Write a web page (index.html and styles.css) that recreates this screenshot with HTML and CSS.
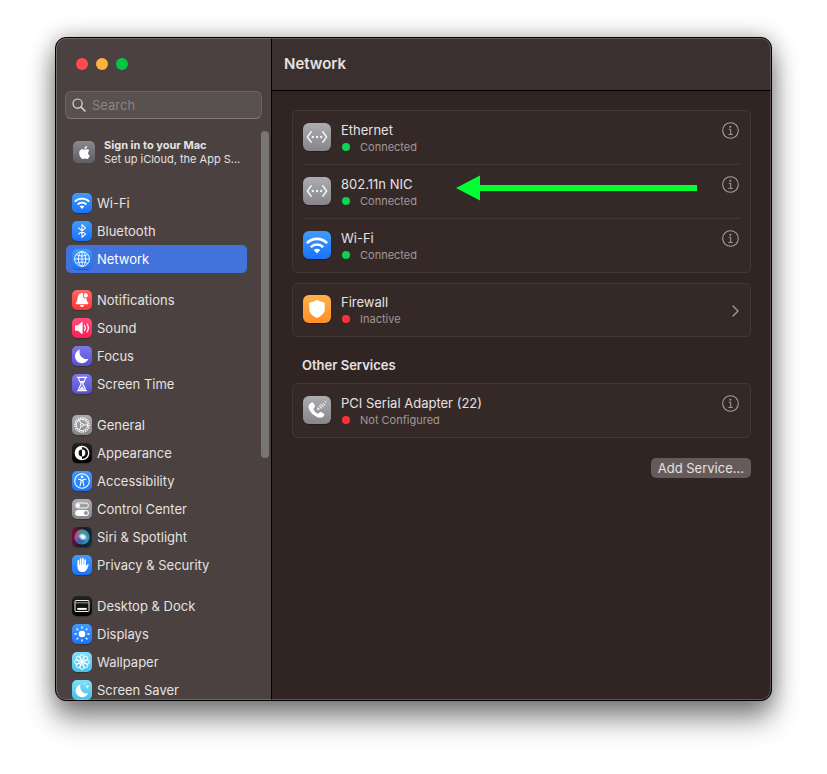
FILE: index.html
```html
<!DOCTYPE html>
<html lang="en">
<head>
<meta charset="utf-8">
<meta name="viewport" content="width=device-width, initial-scale=1">
<title>Network</title>
<link rel="stylesheet" href="styles.css">
</head>
<body>
<svg class="defs" aria-hidden="true">
  <defs>
    <symbol id="wifi" viewBox="0 0 20 20">
      <g fill="none" stroke="#fff" stroke-width="1.8">
        <path d="M2.8 8.6a10.2 10.2 0 0 1 14.4 0"/>
        <path d="M5.6 11.5a6.3 6.3 0 0 1 8.8 0"/>
      </g>
      <path d="M10 16l-2.3-2.4a3.3 3.3 0 0 1 4.6 0z" fill="#fff"/>
    </symbol>
    <symbol id="ethernet" viewBox="0 0 28 28">
      <path d="M8.2 8.8L4.4 14l3.8 5.2M19.8 8.8l3.8 5.2-3.8 5.2" fill="none" stroke="#f4f4f4" stroke-width="1.5" stroke-linecap="round" stroke-linejoin="round"/>
      <g fill="#f4f4f4"><circle cx="9.8" cy="14" r="1.2"/><circle cx="14" cy="14" r="1.2"/><circle cx="18.2" cy="14" r="1.2"/></g>
    </symbol>
    <symbol id="info" viewBox="0 0 17 17">
      <circle cx="8.5" cy="8.5" r="7.8" fill="none" stroke="currentColor" stroke-width="1.1"/>
      <circle cx="8.3" cy="4.7" r="1" fill="currentColor"/>
      <path d="M6.8 7.3h1.9v4.9M6.4 12.4h4.4" fill="none" stroke="currentColor" stroke-width="1"/>
    </symbol>
  </defs>
</svg>

<div class="window">
  <aside class="sidebar">
    <div class="lights">
      <button class="light close" aria-label="Close"></button>
      <button class="light minimize" aria-label="Minimize"></button>
      <button class="light expand" aria-label="Zoom"></button>
    </div>
    <label class="search">
      <svg width="14" height="14" viewBox="0 0 14 14" aria-hidden="true"><circle cx="5.6" cy="5.6" r="4.6" fill="none" stroke="#dedada" stroke-width="1.2"/><path d="M9 9l4 4" stroke="#dedada" stroke-width="1.5" stroke-linecap="round"/></svg>
      <input type="search" placeholder="Search" aria-label="Search">
    </label>
    <a class="account" href="#">
      <span class="account-icon"><svg width="13" height="13" viewBox="0 0 24 24" aria-hidden="true"><path fill="#fff" d="M12.152 6.896c-.948 0-2.415-1.078-3.96-1.04-2.04.027-3.91 1.183-4.961 3.014-2.117 3.675-.546 9.103 1.519 12.09 1.013 1.454 2.208 3.09 3.792 3.039 1.52-.065 2.09-.987 3.935-.987 1.831 0 2.35.987 3.96.948 1.637-.026 2.676-1.48 3.676-2.948 1.156-1.688 1.636-3.325 1.662-3.415-.039-.013-3.182-1.221-3.22-4.857-.026-3.04 2.48-4.494 2.597-4.559-1.429-2.09-3.623-2.324-4.39-2.376-2-.156-3.675 1.09-4.61 1.09zM15.53 3.83c.843-1.012 1.4-2.427 1.245-3.83-1.207.052-2.662.805-3.532 1.818-.78.896-1.454 2.338-1.273 3.714 1.338.104 2.715-.688 3.559-1.701"/></svg></span>
      <span class="account-text"><strong>Sign in to your Mac</strong><span>Set up iCloud, the App S...</span></span>
    </a>
    <nav class="nav" aria-label="Settings">
      <ul>
        <li><a href="#"><span class="tile blue"><svg viewBox="0 0 20 20"><use href="#wifi"/></svg></span>Wi-Fi</a></li>
        <li><a href="#"><span class="tile blue"><svg viewBox="0 0 20 20"><path d="M6.3 6.6l7.2 6.6-3.5 3.2V3.6l3.5 3.2-7.2 6.6" fill="none" stroke="#fff" stroke-width="1.1" stroke-linejoin="round"/></svg></span>Bluetooth</a></li>
        <li><a href="#" class="selected" aria-current="page"><span class="tile blue"><svg viewBox="0 0 20 20"><g fill="none" stroke="#fff" stroke-width=".9"><circle cx="10" cy="10" r="7.4"/><ellipse cx="10" cy="10" rx="3.7" ry="7.4"/><path d="M10 2.6v14.8M2.6 10h14.8M4.3 5.6c3.2 1.9 8.2 1.9 11.4 0M4.3 14.4c3.2-1.9 8.2-1.9 11.4 0"/></g></svg></span>Network</a></li>
      </ul>
      <ul>
        <li><a href="#"><span class="tile red"><svg viewBox="0 0 20 20"><path d="M10 3.2c-3 0-4.300 2.200-4.400 4.900-.1 2.500-.6 3.500-1.700 4.600-.6.7-.3 1.500.6 1.500h11c.9 0 1.200-.8.6-1.500-1.100-1.100-1.600-2.100-1.700-4.600C14.300 5.400 13 3.200 10 3.200zM8 15.100h4a2 2 0 0 1-4 0z" fill="#fff"/><circle cx="13.800" cy="5.400" r="2.900" fill="#ff5750"/><circle cx="13.800" cy="5.400" r="2.100" fill="#fff"/></svg></span>Notifications</a></li>
        <li><a href="#"><span class="tile pink"><svg viewBox="0 0 20 20"><path d="M3 8.200c0-.6.4-.9.900-.9h2.300l3.300-3c.5-.4 1.100-.2 1.100.5v10.400c0 .7-.6.9-1.100.5l-3.300-3H3.900c-.5 0-.9-.3-.9-.9z" fill="#fff"/><path d="M12.600 7.600c1 1.500 1 3.300 0 4.800M15 6c1.700 2.500 1.700 5.500 0 8" fill="none" stroke="#fff" stroke-width="1.200" stroke-linecap="round"/></svg></span>Sound</a></li>
        <li><a href="#"><span class="tile indigo"><svg viewBox="0 0 20 20"><path d="M8 3.500a7 7 0 1 0 8.500 9.300A7 7 0 0 1 8 3.500z" fill="#fff"/></svg></span>Focus</a></li>
        <li><a href="#"><span class="tile indigo"><svg viewBox="0 0 20 20"><path d="M5.500 3.400h9M5.500 16.600h9" stroke="#fff" stroke-width="1.400" stroke-linecap="round"/><path d="M6.700 4c0 3.400 2.400 4 2.400 6s-2.400 2.600-2.400 6h6.600c0-3.400-2.400-4-2.400-6s2.400-2.600 2.400-6" fill="none" stroke="#fff" stroke-width="1.200"/><path d="M8 7h4l-2 2.500zM7.400 15.500L10 12.300l2.600 3.200z" fill="#fff"/></svg></span>Screen Time</a></li>
      </ul>
      <ul>
        <li><a href="#"><span class="tile gray"><svg viewBox="0 0 20 20"><g fill="none" stroke="#fff"><circle cx="10" cy="10" r="7.100" stroke-width="1.500" stroke-dasharray="1.300 .93"/><circle cx="10" cy="10" r="5.700" stroke-width=".9"/><circle cx="10" cy="10" r="1.500" stroke-width=".9"/><path d="M11.500 10H16M9.200 8.700L7 4.900M9.200 11.300L7 15.100" stroke-width="1"/></g></svg></span>General</a></li>
        <li><a href="#"><span class="tile black"><svg viewBox="0 0 20 20"><circle cx="10" cy="10" r="6.700" fill="none" stroke="#fff" stroke-width="1.300"/><path d="M10 3.300a6.700 6.700 0 0 0 0 13.400v-3.300a3.400 3.400 0 0 1 0-6.800zM10 6.600a3.400 3.400 0 0 1 0 6.800z" fill="#fff"/></svg></span>Appearance</a></li>
        <li><a href="#"><span class="tile blue"><svg viewBox="0 0 20 20"><circle cx="10" cy="10" r="7.300" fill="none" stroke="#fff" stroke-width="1.100"/><circle cx="10" cy="5.900" r="1.300" fill="#fff"/><path d="M6.300 8.200l2.700.6v2.300L8 14.900M13.700 8.200l-2.700.6v2.300l1 3.800M9 9.600h2" fill="none" stroke="#fff" stroke-width="1.100" stroke-linecap="round"/></svg></span>Accessibility</a></li>
        <li><a href="#"><span class="tile gray"><svg viewBox="0 0 20 20"><rect x="3.600" y="4" width="12.800" height="5" rx="2.500" fill="none" stroke="#fff" stroke-width="1"/><circle cx="6.100" cy="6.500" r="1.900" fill="#fff"/><rect x="3.100" y="11" width="13.800" height="6" rx="3" fill="#fff"/><circle cx="13.900" cy="14" r="2" fill="#96969a"/></svg></span>Control Center</a></li>
        <li><a href="#"><span class="tile siri"><svg viewBox="0 0 20 20"><defs><linearGradient id="orb" x1="0" y1=".2" x2="1" y2=".8"><stop offset="0" stop-color="#e92b67"/><stop offset=".45" stop-color="#5b7bb0"/><stop offset="1" stop-color="#1d9fc0"/></linearGradient><radialGradient id="glow"><stop offset="0" stop-color="#fff"/><stop offset=".4" stop-color="#e8faff" stop-opacity=".95"/><stop offset="1" stop-color="#9fe" stop-opacity="0"/></radialGradient></defs><circle cx="10" cy="10" r="7.600" fill="url(#orb)"/><path d="M3.500 6.500C7 1 14 1.500 16.800 7c-4-2-8-2-13.300-.5z" fill="#36a57b" opacity=".8"/><path d="M4 14c3-3 4-6 11-6-1 4-2 7-5 9-3 0-5-1-6-3z" fill="#2460a8" opacity=".65"/><ellipse cx="10.800" cy="9.800" rx="5" ry="3.800" fill="url(#glow)" transform="rotate(25 10.800 9.800)"/></svg></span>Siri &amp; Spotlight</a></li>
        <li><a href="#"><span class="tile blue"><svg viewBox="0 0 20 20"><path d="M6.300 10.500V5.900M8.600 9.500V4M10.900 9.500V3.700M13.100 10V5" stroke="#fff" stroke-width="1.700" stroke-linecap="round"/><path d="M5.500 9.500h8.500v1.800l1.200-1.700c.7-.8 1.700-.2 1.400.6-1 2.600-2.100 6.700-5.700 6.900-3.500.2-5.400-2-5.400-5.200z" fill="#fff"/></svg></span>Privacy &amp; Security</a></li>
      </ul>
      <ul>
        <li><a href="#"><span class="tile black"><svg viewBox="0 0 20 20"><rect x="3" y="4.500" width="14" height="11" rx="1" fill="none" stroke="#eee" stroke-width="1"/><path d="M3 6.800h14" stroke="#aaa" stroke-width=".9"/><path d="M5.300 12.900h9.400" stroke="#fff" stroke-width="2"/></svg></span>Desktop &amp; Dock</a></li>
        <li><a href="#"><span class="tile blue"><svg viewBox="0 0 20 20"><circle cx="10" cy="10" r="3.300" fill="#fff"/><path d="M10 3v1.200M10 15.800V17M3 10h1.200M15.800 10H17M5 5l.9.900M14.100 14.100l.9.900M15 5l-.9.900M5.900 14.100L5 15" stroke="#fff" stroke-width="1.300" stroke-linecap="round"/></svg></span>Displays</a></li>
        <li><a href="#"><span class="tile cyan"><svg viewBox="0 0 20 20"><g fill="none" stroke="#fff" stroke-width="1"><circle cx="10" cy="5" r="2.300"/><circle cx="13.500" cy="6.500" r="2.300"/><circle cx="15" cy="10" r="2.300"/><circle cx="13.500" cy="13.500" r="2.300"/><circle cx="10" cy="15" r="2.300"/><circle cx="6.500" cy="13.500" r="2.300"/><circle cx="5" cy="10" r="2.300"/><circle cx="6.500" cy="6.500" r="2.300"/></g><circle cx="10" cy="10" r="2" fill="#fff"/></svg></span>Wallpaper</a></li>
        <li><a href="#"><span class="tile cyan"><svg viewBox="0 0 20 20"><path d="M8.500 4.500a6.500 6.500 0 1 0 7.600 9A6.900 6.900 0 0 1 8.500 4.500z" fill="#fff"/><path d="M15.300 4.500l.5 1.700 1.700.5-1.700.5-.5 1.700-.5-1.700-1.700-.5 1.700-.5zM12.300 2.500l.3 1 1 .3-1 .3-.3 1-.3-1-1-.3 1-.3z" fill="#fff"/></svg></span>Screen Saver</a></li>
      </ul>
    </nav>
    <div class="thumb"></div>
  </aside>

  <main class="main">
    <header class="header"><h1>Network</h1></header>
    <div class="content">
      <section class="card">
        <div class="row">
          <span class="service gray"><svg viewBox="0 0 28 28"><use href="#ethernet"/></svg></span>
          <div class="label"><span class="name">Ethernet</span><span class="status on">Connected</span></div>
          <button class="info" aria-label="Ethernet details"><svg width="17" height="17"><use href="#info"/></svg></button>
        </div>
        <div class="row">
          <span class="service gray"><svg viewBox="0 0 28 28"><use href="#ethernet"/></svg></span>
          <div class="label"><span class="name">802.11n NIC</span><span class="status on">Connected</span></div>
          <button class="info" aria-label="802.11n NIC details"><svg width="17" height="17"><use href="#info"/></svg></button>
          <svg class="arrow" width="241" height="26" viewBox="0 0 241 26" aria-hidden="true"><path d="M0 13L24 0.500v9.500h217v6H24v9.500z" fill="#00ff33"/></svg>
        </div>
        <div class="row">
          <span class="service blue"><svg viewBox="0 0 20 20"><use href="#wifi"/></svg></span>
          <div class="label"><span class="name">Wi-Fi</span><span class="status on">Connected</span></div>
          <button class="info" aria-label="Wi-Fi details"><svg width="17" height="17"><use href="#info"/></svg></button>
        </div>
      </section>

      <section class="card">
        <a class="row row-link" href="#">
          <span class="service orange"><svg viewBox="0 0 28 28"><path d="M14 4.800c2 1.500 4.300 2.300 7 2.600.5.100.7.400.7.900v6.200c0 4.200-3.700 6.500-7.700 8.500-4-2-7.700-4.300-7.700-8.500V8.300c0-.5.2-.8.700-.9 2.700-.3 5-1.100 7-2.600z" fill="#fff"/></svg></span>
          <span class="label"><span class="name">Firewall</span><span class="status off">Inactive</span></span>
          <svg class="chevron" width="8" height="12" viewBox="0 0 8 12" aria-hidden="true"><path d="M1 1l5 5-5 5" fill="none" stroke="currentColor" stroke-width="1.300" stroke-linecap="round" stroke-linejoin="round"/></svg>
        </a>
      </section>

      <h2>Other Services</h2>
      <section class="card">
        <div class="row">
          <span class="service gray"><svg viewBox="0 0 28 28"><path d="M8.300 6.700c.7-.6 1.500-.5 2 .3l1.500 2.300c.5.800.4 1.500-.3 2.200l-.9.900c-.3.300-.3.700-.1 1.100.9 1.700 2.200 3 3.900 3.900.4.200.8.200 1.100-.1l.9-.8c.7-.6 1.400-.7 2.200-.2l2.200 1.500c.8.500.8 1.300.2 2-1.800 2.400-4.500 2.500-7.500.9-3.300-1.700-5.800-4.300-7.300-7.300-1.400-2.700-.6-5.100 2.100-6.700z" fill="#fff"/><path d="M14.700 13.700v-1.200M16.500 10.200l1.800 1.800M15 12l1 1M18 8.500l2.200 2.200M20.500 7.700l1.200 1.200M22.300 5.700l.5.500" stroke="#eee" stroke-width="1.200" stroke-linecap="round"/></svg></span>
          <div class="label"><span class="name">PCI Serial Adapter (22)</span><span class="status off">Not Configured</span></div>
          <button class="info" aria-label="PCI Serial Adapter details"><svg width="17" height="17"><use href="#info"/></svg></button>
        </div>
      </section>
      <button class="add">Add Service...</button>
    </div>
  </main>
</div>
</body>
</html>
```
FILE: styles.css
```css
* {
  box-sizing: border-box;
}

body {
  margin: 0;
  padding: 37px 55px 73px;
  height: 100vh;
  background: #fff;
  color: #e6e2e1;
  font: 13px/16px Inter, "Liberation Sans", sans-serif;
  overflow: hidden;
}

a {
  color: inherit;
  text-decoration: none;
}

button {
  padding: 0;
  border: 0;
  background: none;
  color: inherit;
  font: inherit;
}

svg {
  display: block;
}

.defs {
  position: absolute;
  width: 0;
  height: 0;
}

.window {
  position: relative;
  display: flex;
  height: 100%;
  border: 1px solid #000;
  border-radius: 11px;
  background: #312524;
  box-shadow: 0 18px 28px rgba(0, 0, 0, 0.45), 0 0 22px rgba(0, 0, 0, 0.3);
  overflow: hidden;
}

.window::after {
  content: "";
  position: absolute;
  inset: 0;
  border: 1px solid rgba(255, 255, 255, 0.22);
  border-radius: 10px;
  pointer-events: none;
}

.sidebar {
  position: relative;
  display: flex;
  flex: 0 0 216px;
  flex-direction: column;
  min-width: 0;
  padding: 20px 9px 0;
  border-right: 1px solid #000;
  background: #4a4140;
}

.lights {
  display: flex;
  gap: 8px;
  padding-left: 11px;
}

.light {
  width: 12px;
  height: 12px;
  border-radius: 50%;
}

.close {
  background: #ff4b4f;
}

.minimize {
  background: #ffb13d;
}

.expand {
  background: #00c643;
}

.search {
  display: flex;
  flex: none;
  align-items: center;
  gap: 6px;
  height: 28px;
  margin-top: 21px;
  padding: 0 6px;
  border: 1px solid #6b6261;
  border-bottom-color: #827a79;
  border-radius: 6px;
  background: #595050;
}

.search input {
  flex: 1;
  width: 100%;
  min-width: 0;
  padding: 0;
  border: 0;
  outline: 0;
  background: none;
  color: inherit;
  font: inherit;
}

.search input::placeholder {
  color: #8c8483;
  opacity: 1;
}

.account {
  display: flex;
  flex: none;
  align-items: center;
  gap: 9px;
  margin-top: 19px;
  padding-left: 8px;
  font-size: 11px;
  line-height: 14px;
  white-space: nowrap;
}

.account-icon {
  display: grid;
  place-items: center;
  width: 22px;
  height: 22px;
  border-radius: 5px;
  background: linear-gradient(#88898c, #5d5f62);
}

.account-text {
  display: grid;
}

.nav {
  flex: 1;
  min-height: 0;
  margin: 23px 15px 0 1px;
  overflow: hidden;
}

.nav ul {
  margin: 0 0 13px;
  padding: 0;
  list-style: none;
}

.nav a {
  display: flex;
  align-items: center;
  gap: 5px;
  height: 28px;
  padding-left: 6px;
  border-radius: 5px;
}

.nav .selected {
  background: #4272db;
  color: #fff;
}

.tile {
  width: 20px;
  height: 20px;
  border-radius: 5px;
  box-shadow: 0 1px 1px rgba(0, 0, 0, 0.25);
}

.thumb {
  position: absolute;
  top: 93px;
  right: 2px;
  width: 8px;
  height: 327px;
  border-radius: 4px;
  background: #787575;
}

.blue {
  background: linear-gradient(#3f9bfc, #1c72f8);
}

.red {
  background: linear-gradient(#ff6a62, #ff3236);
}

.pink {
  background: linear-gradient(#ff5079, #ff1d55);
}

.indigo {
  background: linear-gradient(#7f78ea, #564fd2);
}

.gray {
  background: linear-gradient(#adadb1, #85858a);
}

.black {
  background: linear-gradient(#242424, #000);
}

.cyan {
  background: linear-gradient(#7fe0fb, #47bfe9);
}

.orange {
  background: linear-gradient(#ffb04b, #ff8e28);
}

.siri {
  background: linear-gradient(100deg, #7c0e3c, #171a2c 55%, #0c3440);
}

.main {
  flex: 1;
  min-width: 0;
}

.header {
  display: flex;
  align-items: center;
  height: 53px;
  padding-left: 12px;
  border-bottom: 1px solid #000;
  background: #3a302f;
}

h1 {
  margin: 0;
  font-size: 15px;
  line-height: 20px;
  font-weight: 600;
}

.content {
  display: flex;
  flex-direction: column;
  padding: 19px 20px;
}

.card {
  margin-bottom: 10px;
  border: 1px solid #433837;
  border-radius: 5px;
  background: #352928;
}

.row {
  position: relative;
  display: flex;
  align-items: flex-start;
  gap: 10px;
  height: 53px;
  margin: 0 10px;
  padding-top: 11px;
}

.row + .row {
  height: 54px;
  border-top: 1px solid #433837;
}

.row-link {
  height: 52px;
  padding-top: 10px;
}

.service {
  flex: none;
  width: 28px;
  height: 28px;
  margin-top: 1px;
  border-radius: 6px;
  box-shadow: 0 1px 1px rgba(0, 0, 0, 0.3);
}

.label {
  display: grid;
  flex: 1;
}

.status {
  display: flex;
  align-items: center;
  gap: 10px;
  padding-left: 1px;
  color: #a09896;
  font-size: 11px;
  line-height: 18px;
}

.status::before {
  content: "";
  width: 8px;
  height: 8px;
  border-radius: 50%;
}

.on::before {
  background: #0ad454;
}

.off::before {
  background: #ff3039;
}

.info,
.chevron {
  color: #a69e9c;
}

.info {
  margin-right: 1px;
}

.chevron {
  margin-top: 11px;
}

.arrow {
  position: absolute;
  top: 10px;
  right: 43px;
}

h2 {
  margin: 10px 0 10px 10px;
  font-size: 13px;
  line-height: 16px;
  font-weight: 600;
}

.add {
  align-self: flex-end;
  height: 20px;
  margin-top: 10px;
  padding: 0 7px;
  border-radius: 5px;
  background: #655b5a;
}
```
